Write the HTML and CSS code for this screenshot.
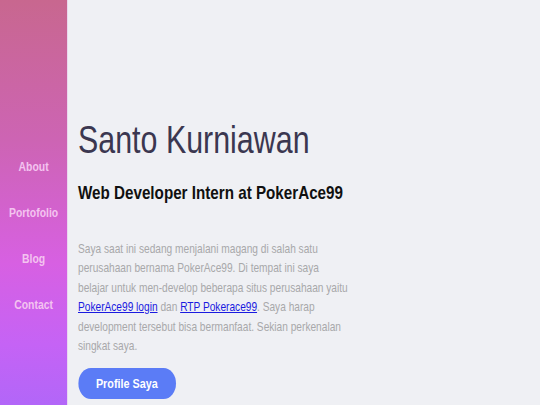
FILE: index.html
```html
<!DOCTYPE html>
<html>
<head>
<meta charset="utf-8">
<link rel="stylesheet" href="styles.css">
</head>
<body>
<div class="page">
  <nav class="sidebar">
    <a class="nav-item" href="#">About</a>
    <a class="nav-item" href="#">Portofolio</a>
    <a class="nav-item" href="#">Blog</a>
    <a class="nav-item" href="#">Contact</a>
  </nav>
  <main class="main">
    <h1 class="title">Santo Kurniawan</h1>
    <h2 class="subtitle">Web Developer Intern at PokerAce99</h2>
    <p class="intro">Saya saat ini sedang menjalani magang di salah satu perusahaan bernama PokerAce99. Di tempat ini saya<br>belajar untuk men-develop beberapa situs perusahaan yaitu <a href="#">PokerAce99 login</a> dan <a href="#">RTP Pokerace99</a>. Saya harap development tersebut bisa bermanfaat. Sekian perkenalan singkat saya.</p>
    <a class="btn" href="#">Profile Saya</a>
  </main>
</div>
</body>
</html>
```
FILE: styles.css
```css
html, body {
  margin: 0;
  padding: 0;
  width: 540px;
  height: 405px;
  overflow: hidden;
}
body {
  font-family: "Liberation Sans", Arial, sans-serif;
  background: #eff0f4;
}
.page {
  display: flex;
  width: 675px;
  height: 405px;
  transform: scaleX(0.8);
  transform-origin: 0 0;
}
.sidebar {
  width: 85px;
  flex: none;
  border-right: 1px solid #ead8f0;
  background: linear-gradient(180deg, #c8678f 0%, #cd64b4 35%, #d760e2 65%, #c563f5 85%, #b266f8 100%);
  display: flex;
  flex-direction: column;
  align-items: center;
  padding-top: 157px;
  gap: 26px;
  box-sizing: border-box;
}
.nav-item {
  color: #f4c4f0;
  font-weight: bold;
  font-size: 13px;
  line-height: 20px;
  text-decoration: none;
}
.main {
  flex: 1;
  display: flex;
  flex-direction: column;
  align-items: flex-start;
  padding: 117.5px 0 0 12.5px;
  box-sizing: border-box;
}
.title {
  margin: 0;
  font-weight: normal;
  font-size: 38px;
  line-height: 44px;
  color: #3b3750;
}
.subtitle {
  margin: 20px 0 0 0;
  font-weight: bold;
  font-size: 19px;
  line-height: 22px;
  color: #101010;
}
.intro {
  margin: 36px 0 0 0;
  width: 356px;
  font-size: 12.7px;
  line-height: 19.6px;
  color: #a8a8aa;
}
.intro a {
  color: #1a1ae0;
  text-decoration: underline;
}
.btn {
  display: flex;
  align-items: center;
  justify-content: center;
  margin-top: 11px;
  width: 122px;
  height: 31px;
  border-radius: 16px;
  background: #5b7cf6;
  color: #ffffff;
  font-weight: bold;
  font-size: 13.5px;
  text-decoration: none;
}
```
